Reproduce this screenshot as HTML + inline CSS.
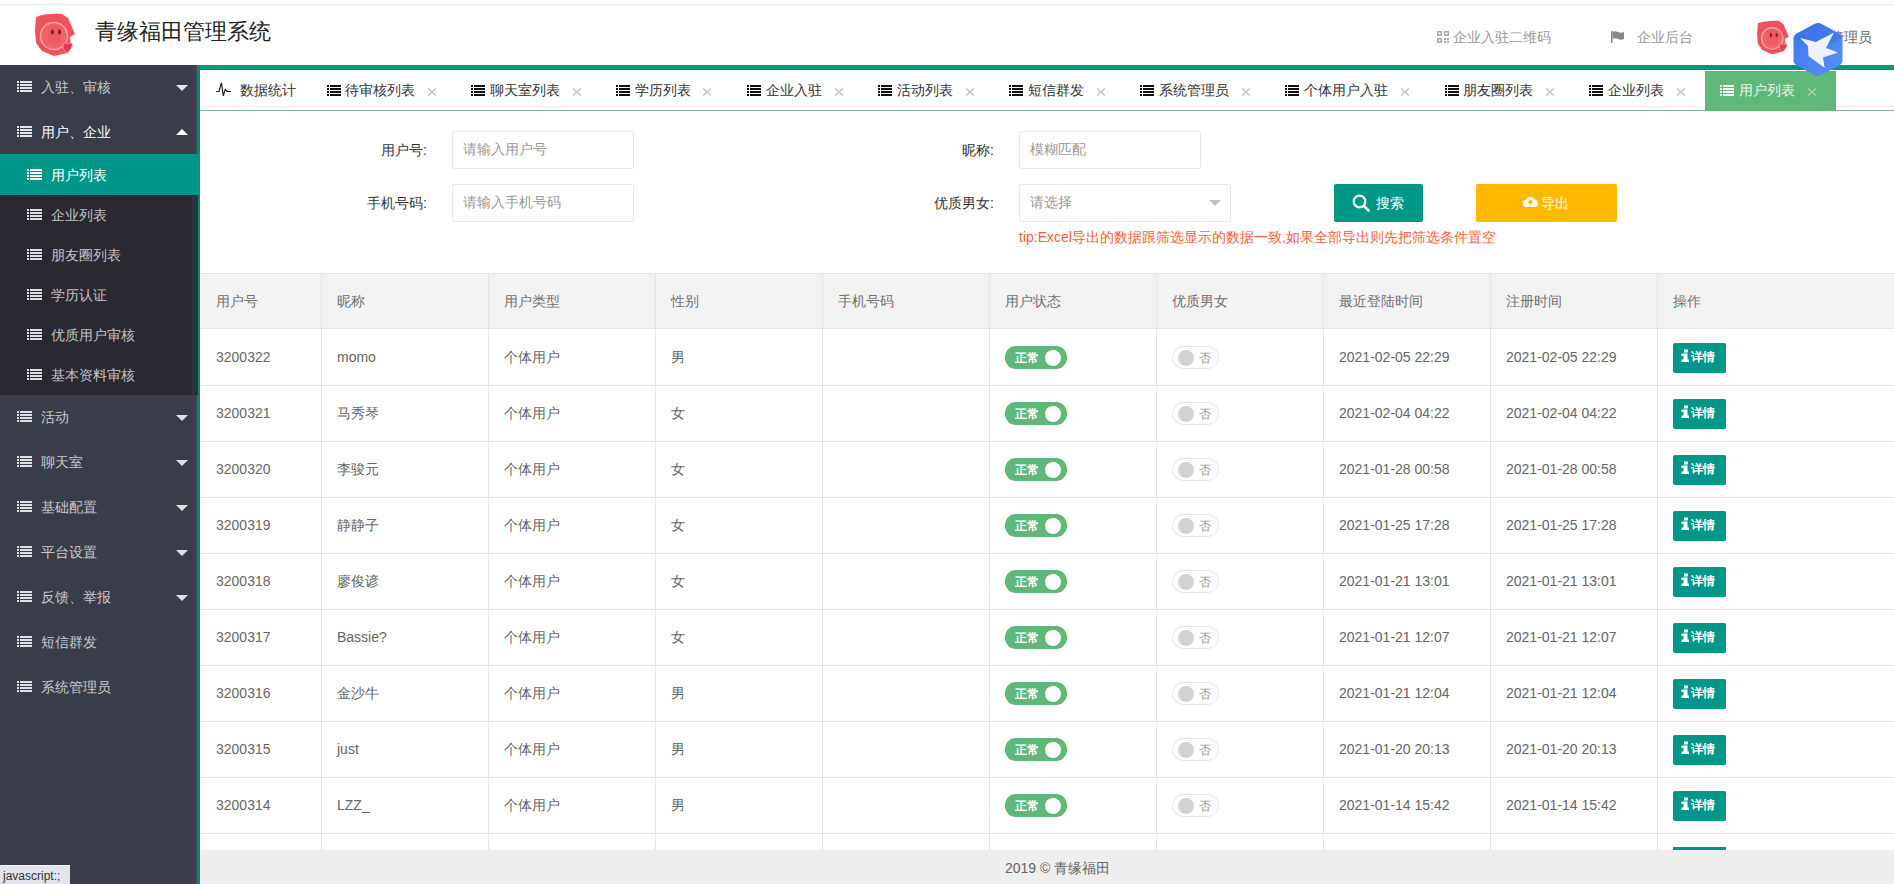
<!DOCTYPE html>
<html><head><meta charset="utf-8"><style>
html,body{margin:0;padding:0}
body{width:1894px;height:884px;overflow:hidden;position:relative;background:#fff;font-family:"Liberation Sans",sans-serif}
.t{position:absolute;white-space:nowrap;line-height:20px}
</style></head><body>
<div style="position:absolute;left:0;top:0;width:1894px;height:65px;background:#fff"></div>
<div style="position:absolute;left:0;top:4px;width:1894px;height:1px;background:#e4e4e4"></div>
<svg style="position:absolute;left:34px;top:13px" width="42" height="44" viewBox="0 0 42 44">
<path d="M2 4 Q12 0 28 1 L34 5 L41 21 L36 24 L37 34 L33 40 L20 43 L8 38 L2 30 L1 18 Z" fill="#f0525c"/>
<circle cx="20" cy="23" r="13.5" fill="#f26368" stroke="#f9a3a6" stroke-width="1.6"/>
<path d="M14 14 Q20 11 27 14 L27 30 Q20 33 14 30 Z" fill="#f0575f" opacity="0.7"/>
<ellipse cx="18.4" cy="19" rx="1.5" ry="2.8" fill="#8c1c24"/><ellipse cx="25.6" cy="19" rx="1.5" ry="2.8" fill="#8c1c24"/>
<path d="M29 31 Q31.5 28.5 34 31 Q36.5 28.5 38.5 31.5 Q38.5 35 33.5 40 Q28 36 29 31 Z" fill="#ec3350" stroke="#f8a8b0" stroke-width="0.8"/>
</svg>
<div class="t" style="left:95px;top:22px;font-size:22px;color:#222;">青缘福田管理系统</div>
<svg style="position:absolute;left:1437px;top:31px" width="12" height="12" viewBox="0 0 12 12" fill="#aaa"><path d="M0 0 H5 V5 H0 Z M1.5 1.5 V3.5 H3.5 V1.5 Z M7 0 H12 V5 H7 Z M8.5 1.5 V3.5 H10.5 V1.5 Z M0 7 H5 V12 H0 Z M1.5 8.5 V10.5 H3.5 V8.5 Z M7 7 H9 V9 H7 Z M10 7 H12 V9 H10 Z M7 10 H9 V12 H7 Z M10 10 H12 V12 H10 Z"/></svg>
<div class="t" style="left:1453px;top:27px;font-size:14px;color:#999;">企业入驻二维码</div>
<svg style="position:absolute;left:1611px;top:31px" width="14" height="12" viewBox="0 0 14 12" fill="#888"><rect x="0" y="0" width="1.5" height="12"/><path d="M1.5 1 Q4 -0.5 7 1 T13 1 V8 Q10 9.5 7 8 T1.5 8 Z"/></svg>
<div class="t" style="left:1637px;top:27px;font-size:14px;color:#999;">企业后台</div>
<svg style="position:absolute;left:1756px;top:20px" width="34" height="35" viewBox="0 0 42 44">
<path d="M2 4 Q12 0 28 1 L34 5 L41 21 L36 24 L37 34 L33 40 L20 43 L8 38 L2 30 L1 18 Z" fill="#f0525c"/>
<circle cx="20" cy="23" r="13.5" fill="#f26368" stroke="#f9a3a6" stroke-width="1.6"/>
<path d="M14 14 Q20 11 27 14 L27 30 Q20 33 14 30 Z" fill="#f0575f" opacity="0.7"/>
<ellipse cx="18.4" cy="19" rx="1.5" ry="2.8" fill="#8c1c24"/><ellipse cx="25.6" cy="19" rx="1.5" ry="2.8" fill="#8c1c24"/>
<path d="M29 31 Q31.5 28.5 34 31 Q36.5 28.5 38.5 31.5 Q38.5 35 33.5 40 Q28 36 29 31 Z" fill="#ec3350" stroke="#f8a8b0" stroke-width="0.8"/>
</svg>
<div class="t" style="left:1830px;top:27px;font-size:14px;color:#666;">管理员</div>
<div style="position:absolute;left:0;top:65px;width:192px;height:819px;background:#393d49"></div>
<div style="position:absolute;left:192px;top:65px;width:3px;height:819px;background:#46384f"></div>
<div style="position:absolute;left:195px;top:65px;width:2px;height:819px;background:#145a50"></div>
<div style="position:absolute;left:197px;top:65px;width:3px;height:819px;background:#2c7766"></div>
<div style="position:absolute;left:0;top:144px;width:192px;height:10px;background:#3d3c45"></div>
<div style="position:absolute;left:0;top:154px;width:192px;height:241px;background:#2a2931"></div>
<div style="position:absolute;left:192px;top:195px;width:2px;height:200px;background:#3a2a40"></div>
<div style="position:absolute;left:194px;top:195px;width:4px;height:200px;background:#0c3e3a"></div>
<div style="position:absolute;left:0;top:154px;width:200px;height:41px;background:#009688"></div>
<svg style="position:absolute;left:17px;top:81px" width="15" height="11" viewBox="0 0 15 11" fill="#e6e6ea" opacity="1"><rect x="0" y="0" width="2" height="2"/><rect x="3" y="0" width="12" height="2"/><rect x="0" y="3" width="2" height="2"/><rect x="3" y="3" width="12" height="2"/><rect x="0" y="6" width="2" height="2"/><rect x="3" y="6" width="12" height="2"/><rect x="0" y="9" width="2" height="2"/><rect x="3" y="9" width="12" height="2"/></svg>
<div class="t" style="left:41px;top:77px;font-size:14px;color:#c8c9cd;">入驻、审核</div>
<svg style="position:absolute;left:176px;top:85px" width="12" height="6" viewBox="0 0 12 6"><path d="M0 0 L12 0 L6 6 Z" fill="#e4e4e4"/></svg>
<svg style="position:absolute;left:17px;top:126px" width="15" height="11" viewBox="0 0 15 11" fill="#e6e6ea" opacity="1"><rect x="0" y="0" width="2" height="2"/><rect x="3" y="0" width="12" height="2"/><rect x="0" y="3" width="2" height="2"/><rect x="3" y="3" width="12" height="2"/><rect x="0" y="6" width="2" height="2"/><rect x="3" y="6" width="12" height="2"/><rect x="0" y="9" width="2" height="2"/><rect x="3" y="9" width="12" height="2"/></svg>
<div class="t" style="left:41px;top:122px;font-size:14px;color:#fff;">用户、企业</div>
<svg style="position:absolute;left:176px;top:129px" width="12" height="6" viewBox="0 0 12 6"><path d="M0 6 L6 0 L12 6 Z" fill="#fff"/></svg>
<svg style="position:absolute;left:27px;top:169px" width="15" height="11" viewBox="0 0 15 11" fill="#fff" opacity="1"><rect x="0" y="0" width="2" height="2"/><rect x="3" y="0" width="12" height="2"/><rect x="0" y="3" width="2" height="2"/><rect x="3" y="3" width="12" height="2"/><rect x="0" y="6" width="2" height="2"/><rect x="3" y="6" width="12" height="2"/><rect x="0" y="9" width="2" height="2"/><rect x="3" y="9" width="12" height="2"/></svg>
<div class="t" style="left:51px;top:165px;font-size:14px;color:#fff;">用户列表</div>
<svg style="position:absolute;left:27px;top:209px" width="15" height="11" viewBox="0 0 15 11" fill="#e0e0e4" opacity="1"><rect x="0" y="0" width="2" height="2"/><rect x="3" y="0" width="12" height="2"/><rect x="0" y="3" width="2" height="2"/><rect x="3" y="3" width="12" height="2"/><rect x="0" y="6" width="2" height="2"/><rect x="3" y="6" width="12" height="2"/><rect x="0" y="9" width="2" height="2"/><rect x="3" y="9" width="12" height="2"/></svg>
<div class="t" style="left:51px;top:205px;font-size:14px;color:#c4c3c8;">企业列表</div>
<svg style="position:absolute;left:27px;top:249px" width="15" height="11" viewBox="0 0 15 11" fill="#e0e0e4" opacity="1"><rect x="0" y="0" width="2" height="2"/><rect x="3" y="0" width="12" height="2"/><rect x="0" y="3" width="2" height="2"/><rect x="3" y="3" width="12" height="2"/><rect x="0" y="6" width="2" height="2"/><rect x="3" y="6" width="12" height="2"/><rect x="0" y="9" width="2" height="2"/><rect x="3" y="9" width="12" height="2"/></svg>
<div class="t" style="left:51px;top:245px;font-size:14px;color:#c4c3c8;">朋友圈列表</div>
<svg style="position:absolute;left:27px;top:289px" width="15" height="11" viewBox="0 0 15 11" fill="#e0e0e4" opacity="1"><rect x="0" y="0" width="2" height="2"/><rect x="3" y="0" width="12" height="2"/><rect x="0" y="3" width="2" height="2"/><rect x="3" y="3" width="12" height="2"/><rect x="0" y="6" width="2" height="2"/><rect x="3" y="6" width="12" height="2"/><rect x="0" y="9" width="2" height="2"/><rect x="3" y="9" width="12" height="2"/></svg>
<div class="t" style="left:51px;top:285px;font-size:14px;color:#c4c3c8;">学历认证</div>
<svg style="position:absolute;left:27px;top:329px" width="15" height="11" viewBox="0 0 15 11" fill="#e0e0e4" opacity="1"><rect x="0" y="0" width="2" height="2"/><rect x="3" y="0" width="12" height="2"/><rect x="0" y="3" width="2" height="2"/><rect x="3" y="3" width="12" height="2"/><rect x="0" y="6" width="2" height="2"/><rect x="3" y="6" width="12" height="2"/><rect x="0" y="9" width="2" height="2"/><rect x="3" y="9" width="12" height="2"/></svg>
<div class="t" style="left:51px;top:325px;font-size:14px;color:#c4c3c8;">优质用户审核</div>
<svg style="position:absolute;left:27px;top:369px" width="15" height="11" viewBox="0 0 15 11" fill="#e0e0e4" opacity="1"><rect x="0" y="0" width="2" height="2"/><rect x="3" y="0" width="12" height="2"/><rect x="0" y="3" width="2" height="2"/><rect x="3" y="3" width="12" height="2"/><rect x="0" y="6" width="2" height="2"/><rect x="3" y="6" width="12" height="2"/><rect x="0" y="9" width="2" height="2"/><rect x="3" y="9" width="12" height="2"/></svg>
<div class="t" style="left:51px;top:365px;font-size:14px;color:#c4c3c8;">基本资料审核</div>
<svg style="position:absolute;left:17px;top:411px" width="15" height="11" viewBox="0 0 15 11" fill="#e0e0e4" opacity="1"><rect x="0" y="0" width="2" height="2"/><rect x="3" y="0" width="12" height="2"/><rect x="0" y="3" width="2" height="2"/><rect x="3" y="3" width="12" height="2"/><rect x="0" y="6" width="2" height="2"/><rect x="3" y="6" width="12" height="2"/><rect x="0" y="9" width="2" height="2"/><rect x="3" y="9" width="12" height="2"/></svg>
<div class="t" style="left:41px;top:407px;font-size:14px;color:#c8c9cd;">活动</div>
<svg style="position:absolute;left:176px;top:415px" width="12" height="6" viewBox="0 0 12 6"><path d="M0 0 L12 0 L6 6 Z" fill="#e0e0e0"/></svg>
<svg style="position:absolute;left:17px;top:456px" width="15" height="11" viewBox="0 0 15 11" fill="#e0e0e4" opacity="1"><rect x="0" y="0" width="2" height="2"/><rect x="3" y="0" width="12" height="2"/><rect x="0" y="3" width="2" height="2"/><rect x="3" y="3" width="12" height="2"/><rect x="0" y="6" width="2" height="2"/><rect x="3" y="6" width="12" height="2"/><rect x="0" y="9" width="2" height="2"/><rect x="3" y="9" width="12" height="2"/></svg>
<div class="t" style="left:41px;top:452px;font-size:14px;color:#c8c9cd;">聊天室</div>
<svg style="position:absolute;left:176px;top:460px" width="12" height="6" viewBox="0 0 12 6"><path d="M0 0 L12 0 L6 6 Z" fill="#e0e0e0"/></svg>
<svg style="position:absolute;left:17px;top:501px" width="15" height="11" viewBox="0 0 15 11" fill="#e0e0e4" opacity="1"><rect x="0" y="0" width="2" height="2"/><rect x="3" y="0" width="12" height="2"/><rect x="0" y="3" width="2" height="2"/><rect x="3" y="3" width="12" height="2"/><rect x="0" y="6" width="2" height="2"/><rect x="3" y="6" width="12" height="2"/><rect x="0" y="9" width="2" height="2"/><rect x="3" y="9" width="12" height="2"/></svg>
<div class="t" style="left:41px;top:497px;font-size:14px;color:#c8c9cd;">基础配置</div>
<svg style="position:absolute;left:176px;top:505px" width="12" height="6" viewBox="0 0 12 6"><path d="M0 0 L12 0 L6 6 Z" fill="#e0e0e0"/></svg>
<svg style="position:absolute;left:17px;top:546px" width="15" height="11" viewBox="0 0 15 11" fill="#e0e0e4" opacity="1"><rect x="0" y="0" width="2" height="2"/><rect x="3" y="0" width="12" height="2"/><rect x="0" y="3" width="2" height="2"/><rect x="3" y="3" width="12" height="2"/><rect x="0" y="6" width="2" height="2"/><rect x="3" y="6" width="12" height="2"/><rect x="0" y="9" width="2" height="2"/><rect x="3" y="9" width="12" height="2"/></svg>
<div class="t" style="left:41px;top:542px;font-size:14px;color:#c8c9cd;">平台设置</div>
<svg style="position:absolute;left:176px;top:550px" width="12" height="6" viewBox="0 0 12 6"><path d="M0 0 L12 0 L6 6 Z" fill="#e0e0e0"/></svg>
<svg style="position:absolute;left:17px;top:591px" width="15" height="11" viewBox="0 0 15 11" fill="#e0e0e4" opacity="1"><rect x="0" y="0" width="2" height="2"/><rect x="3" y="0" width="12" height="2"/><rect x="0" y="3" width="2" height="2"/><rect x="3" y="3" width="12" height="2"/><rect x="0" y="6" width="2" height="2"/><rect x="3" y="6" width="12" height="2"/><rect x="0" y="9" width="2" height="2"/><rect x="3" y="9" width="12" height="2"/></svg>
<div class="t" style="left:41px;top:587px;font-size:14px;color:#c8c9cd;">反馈、举报</div>
<svg style="position:absolute;left:176px;top:595px" width="12" height="6" viewBox="0 0 12 6"><path d="M0 0 L12 0 L6 6 Z" fill="#e0e0e0"/></svg>
<svg style="position:absolute;left:17px;top:636px" width="15" height="11" viewBox="0 0 15 11" fill="#e0e0e4" opacity="1"><rect x="0" y="0" width="2" height="2"/><rect x="3" y="0" width="12" height="2"/><rect x="0" y="3" width="2" height="2"/><rect x="3" y="3" width="12" height="2"/><rect x="0" y="6" width="2" height="2"/><rect x="3" y="6" width="12" height="2"/><rect x="0" y="9" width="2" height="2"/><rect x="3" y="9" width="12" height="2"/></svg>
<div class="t" style="left:41px;top:632px;font-size:14px;color:#c8c9cd;">短信群发</div>
<svg style="position:absolute;left:17px;top:681px" width="15" height="11" viewBox="0 0 15 11" fill="#e0e0e4" opacity="1"><rect x="0" y="0" width="2" height="2"/><rect x="3" y="0" width="12" height="2"/><rect x="0" y="3" width="2" height="2"/><rect x="3" y="3" width="12" height="2"/><rect x="0" y="6" width="2" height="2"/><rect x="3" y="6" width="12" height="2"/><rect x="0" y="9" width="2" height="2"/><rect x="3" y="9" width="12" height="2"/></svg>
<div class="t" style="left:41px;top:677px;font-size:14px;color:#c8c9cd;">系统管理员</div>
<div style="position:absolute;left:200px;top:65px;width:1694px;height:5px;background:#009a7a"></div>
<div style="position:absolute;left:200px;top:106px;width:1694px;height:1px;background:#ecf0ef"></div>
<div style="position:absolute;left:200px;top:110px;width:1694px;height:1px;background:#86aea0"></div>
<svg style="position:absolute;left:215px;top:82px" width="17" height="15" viewBox="0 0 17 15"><path d="M1 9.5 H4 L6.4 0.8 L8.3 13.8 L10.2 7.4 L12 9.5 H16" fill="none" stroke="#222" stroke-width="1.2" stroke-linejoin="miter"/></svg>
<div class="t" style="left:240px;top:80px;font-size:14px;color:#333;">数据统计</div>
<svg style="position:absolute;left:327px;top:85px" width="14" height="11" viewBox="0 0 14 11" fill="#111" opacity="1"><rect x="0" y="0" width="2" height="2"/><rect x="3" y="0" width="11" height="2"/><rect x="0" y="3" width="2" height="2"/><rect x="3" y="3" width="11" height="2"/><rect x="0" y="6" width="2" height="2"/><rect x="3" y="6" width="11" height="2"/><rect x="0" y="9" width="2" height="2"/><rect x="3" y="9" width="11" height="2"/></svg>
<div class="t" style="left:345px;top:80px;font-size:14px;color:#333;">待审核列表</div>
<svg style="position:absolute;left:427px;top:88px" width="10" height="8" viewBox="0 0 10 8"><path d="M1 0.5 L9 7.5 M9 0.5 L1 7.5" stroke="#c4c4c4" stroke-width="1.6"/></svg>
<svg style="position:absolute;left:471px;top:85px" width="14" height="11" viewBox="0 0 14 11" fill="#111" opacity="1"><rect x="0" y="0" width="2" height="2"/><rect x="3" y="0" width="11" height="2"/><rect x="0" y="3" width="2" height="2"/><rect x="3" y="3" width="11" height="2"/><rect x="0" y="6" width="2" height="2"/><rect x="3" y="6" width="11" height="2"/><rect x="0" y="9" width="2" height="2"/><rect x="3" y="9" width="11" height="2"/></svg>
<div class="t" style="left:490px;top:80px;font-size:14px;color:#333;">聊天室列表</div>
<svg style="position:absolute;left:572px;top:88px" width="10" height="8" viewBox="0 0 10 8"><path d="M1 0.5 L9 7.5 M9 0.5 L1 7.5" stroke="#c4c4c4" stroke-width="1.6"/></svg>
<svg style="position:absolute;left:616px;top:85px" width="14" height="11" viewBox="0 0 14 11" fill="#111" opacity="1"><rect x="0" y="0" width="2" height="2"/><rect x="3" y="0" width="11" height="2"/><rect x="0" y="3" width="2" height="2"/><rect x="3" y="3" width="11" height="2"/><rect x="0" y="6" width="2" height="2"/><rect x="3" y="6" width="11" height="2"/><rect x="0" y="9" width="2" height="2"/><rect x="3" y="9" width="11" height="2"/></svg>
<div class="t" style="left:635px;top:80px;font-size:14px;color:#333;">学历列表</div>
<svg style="position:absolute;left:702px;top:88px" width="10" height="8" viewBox="0 0 10 8"><path d="M1 0.5 L9 7.5 M9 0.5 L1 7.5" stroke="#c4c4c4" stroke-width="1.6"/></svg>
<svg style="position:absolute;left:747px;top:85px" width="14" height="11" viewBox="0 0 14 11" fill="#111" opacity="1"><rect x="0" y="0" width="2" height="2"/><rect x="3" y="0" width="11" height="2"/><rect x="0" y="3" width="2" height="2"/><rect x="3" y="3" width="11" height="2"/><rect x="0" y="6" width="2" height="2"/><rect x="3" y="6" width="11" height="2"/><rect x="0" y="9" width="2" height="2"/><rect x="3" y="9" width="11" height="2"/></svg>
<div class="t" style="left:766px;top:80px;font-size:14px;color:#333;">企业入驻</div>
<svg style="position:absolute;left:834px;top:88px" width="10" height="8" viewBox="0 0 10 8"><path d="M1 0.5 L9 7.5 M9 0.5 L1 7.5" stroke="#c4c4c4" stroke-width="1.6"/></svg>
<svg style="position:absolute;left:878px;top:85px" width="14" height="11" viewBox="0 0 14 11" fill="#111" opacity="1"><rect x="0" y="0" width="2" height="2"/><rect x="3" y="0" width="11" height="2"/><rect x="0" y="3" width="2" height="2"/><rect x="3" y="3" width="11" height="2"/><rect x="0" y="6" width="2" height="2"/><rect x="3" y="6" width="11" height="2"/><rect x="0" y="9" width="2" height="2"/><rect x="3" y="9" width="11" height="2"/></svg>
<div class="t" style="left:897px;top:80px;font-size:14px;color:#333;">活动列表</div>
<svg style="position:absolute;left:965px;top:88px" width="10" height="8" viewBox="0 0 10 8"><path d="M1 0.5 L9 7.5 M9 0.5 L1 7.5" stroke="#c4c4c4" stroke-width="1.6"/></svg>
<svg style="position:absolute;left:1009px;top:85px" width="14" height="11" viewBox="0 0 14 11" fill="#111" opacity="1"><rect x="0" y="0" width="2" height="2"/><rect x="3" y="0" width="11" height="2"/><rect x="0" y="3" width="2" height="2"/><rect x="3" y="3" width="11" height="2"/><rect x="0" y="6" width="2" height="2"/><rect x="3" y="6" width="11" height="2"/><rect x="0" y="9" width="2" height="2"/><rect x="3" y="9" width="11" height="2"/></svg>
<div class="t" style="left:1028px;top:80px;font-size:14px;color:#333;">短信群发</div>
<svg style="position:absolute;left:1096px;top:88px" width="10" height="8" viewBox="0 0 10 8"><path d="M1 0.5 L9 7.5 M9 0.5 L1 7.5" stroke="#c4c4c4" stroke-width="1.6"/></svg>
<svg style="position:absolute;left:1140px;top:85px" width="14" height="11" viewBox="0 0 14 11" fill="#111" opacity="1"><rect x="0" y="0" width="2" height="2"/><rect x="3" y="0" width="11" height="2"/><rect x="0" y="3" width="2" height="2"/><rect x="3" y="3" width="11" height="2"/><rect x="0" y="6" width="2" height="2"/><rect x="3" y="6" width="11" height="2"/><rect x="0" y="9" width="2" height="2"/><rect x="3" y="9" width="11" height="2"/></svg>
<div class="t" style="left:1159px;top:80px;font-size:14px;color:#333;">系统管理员</div>
<svg style="position:absolute;left:1241px;top:88px" width="10" height="8" viewBox="0 0 10 8"><path d="M1 0.5 L9 7.5 M9 0.5 L1 7.5" stroke="#c4c4c4" stroke-width="1.6"/></svg>
<svg style="position:absolute;left:1285px;top:85px" width="14" height="11" viewBox="0 0 14 11" fill="#111" opacity="1"><rect x="0" y="0" width="2" height="2"/><rect x="3" y="0" width="11" height="2"/><rect x="0" y="3" width="2" height="2"/><rect x="3" y="3" width="11" height="2"/><rect x="0" y="6" width="2" height="2"/><rect x="3" y="6" width="11" height="2"/><rect x="0" y="9" width="2" height="2"/><rect x="3" y="9" width="11" height="2"/></svg>
<div class="t" style="left:1304px;top:80px;font-size:14px;color:#333;">个体用户入驻</div>
<svg style="position:absolute;left:1400px;top:88px" width="10" height="8" viewBox="0 0 10 8"><path d="M1 0.5 L9 7.5 M9 0.5 L1 7.5" stroke="#c4c4c4" stroke-width="1.6"/></svg>
<svg style="position:absolute;left:1445px;top:85px" width="14" height="11" viewBox="0 0 14 11" fill="#111" opacity="1"><rect x="0" y="0" width="2" height="2"/><rect x="3" y="0" width="11" height="2"/><rect x="0" y="3" width="2" height="2"/><rect x="3" y="3" width="11" height="2"/><rect x="0" y="6" width="2" height="2"/><rect x="3" y="6" width="11" height="2"/><rect x="0" y="9" width="2" height="2"/><rect x="3" y="9" width="11" height="2"/></svg>
<div class="t" style="left:1463px;top:80px;font-size:14px;color:#333;">朋友圈列表</div>
<svg style="position:absolute;left:1545px;top:88px" width="10" height="8" viewBox="0 0 10 8"><path d="M1 0.5 L9 7.5 M9 0.5 L1 7.5" stroke="#c4c4c4" stroke-width="1.6"/></svg>
<svg style="position:absolute;left:1589px;top:85px" width="14" height="11" viewBox="0 0 14 11" fill="#111" opacity="1"><rect x="0" y="0" width="2" height="2"/><rect x="3" y="0" width="11" height="2"/><rect x="0" y="3" width="2" height="2"/><rect x="3" y="3" width="11" height="2"/><rect x="0" y="6" width="2" height="2"/><rect x="3" y="6" width="11" height="2"/><rect x="0" y="9" width="2" height="2"/><rect x="3" y="9" width="11" height="2"/></svg>
<div class="t" style="left:1608px;top:80px;font-size:14px;color:#333;">企业列表</div>
<svg style="position:absolute;left:1676px;top:88px" width="10" height="8" viewBox="0 0 10 8"><path d="M1 0.5 L9 7.5 M9 0.5 L1 7.5" stroke="#c4c4c4" stroke-width="1.6"/></svg>
<div style="position:absolute;left:1705px;top:71px;width:131px;height:40px;background:#5fb878"></div>
<svg style="position:absolute;left:1720px;top:85px" width="14" height="11" viewBox="0 0 14 11" fill="#fff" opacity="0.9"><rect x="0" y="0" width="2" height="2"/><rect x="3" y="0" width="11" height="2"/><rect x="0" y="3" width="2" height="2"/><rect x="3" y="3" width="11" height="2"/><rect x="0" y="6" width="2" height="2"/><rect x="3" y="6" width="11" height="2"/><rect x="0" y="9" width="2" height="2"/><rect x="3" y="9" width="11" height="2"/></svg>
<div class="t" style="left:1739px;top:80px;font-size:14px;color:#eaf6ee;">用户列表</div>
<svg style="position:absolute;left:1807px;top:88px" width="10" height="8" viewBox="0 0 10 8"><path d="M1 0.5 L9 7.5 M9 0.5 L1 7.5" stroke="#9fd2ae" stroke-width="1.6"/></svg>
<div class="t" style="left:381px;top:140px;font-size:14px;color:#333;">用户号:</div>
<div style="position:absolute;left:452px;top:131px;width:180px;height:36px;border:1px solid #e8e8e8;border-radius:2px;background:#fff"></div><div class="t" style="left:463px;top:139px;font-size:14px;color:#999;">请输入用户号</div>
<div class="t" style="left:367px;top:193px;font-size:14px;color:#333;">手机号码:</div>
<div style="position:absolute;left:452px;top:184px;width:180px;height:36px;border:1px solid #e8e8e8;border-radius:2px;background:#fff"></div><div class="t" style="left:463px;top:192px;font-size:14px;color:#999;">请输入手机号码</div>
<div class="t" style="left:962px;top:140px;font-size:14px;color:#333;">昵称:</div>
<div style="position:absolute;left:1019px;top:131px;width:180px;height:36px;border:1px solid #e8e8e8;border-radius:2px;background:#fff"></div><div class="t" style="left:1030px;top:139px;font-size:14px;color:#999;">模糊匹配</div>
<div class="t" style="left:934px;top:193px;font-size:14px;color:#333;">优质男女:</div>
<div style="position:absolute;left:1019px;top:184px;width:210px;height:36px;border:1px solid #e8e8e8;border-radius:2px;background:#fff"></div><div class="t" style="left:1030px;top:192px;font-size:14px;color:#999;">请选择</div>
<svg style="position:absolute;left:1209px;top:200px" width="12" height="6" viewBox="0 0 12 6"><path d="M0 0 L12 0 L6 6 Z" fill="#c2c2c2"/></svg>
<div style="position:absolute;left:1334px;top:184px;width:89px;height:38px;background:#009688;border-radius:2px"></div>
<svg style="position:absolute;left:1352px;top:194px" width="18" height="18" viewBox="0 0 18 18"><circle cx="7.5" cy="7.5" r="5.8" fill="none" stroke="#fff" stroke-width="2.2"/><path d="M12 12 L16.5 16.5" stroke="#fff" stroke-width="2.6" stroke-linecap="round"/></svg>
<div class="t" style="left:1376px;top:193px;font-size:14px;color:#fff;">搜索</div>
<div style="position:absolute;left:1476px;top:184px;width:141px;height:38px;background:#ffb800;border-radius:2px"></div>
<svg style="position:absolute;left:1523px;top:196px" width="15" height="12" viewBox="0 0 15 12"><path d="M3.5 11 A3.5 3.5 0 0 1 3 4 A4.5 4.5 0 0 1 11.5 3.5 A3.8 3.8 0 0 1 12 11 Z" fill="#fff"/><path d="M7.5 4 V9 M5.3 6.8 L7.5 4.5 L9.7 6.8" stroke="#ffb800" stroke-width="1.5" fill="none"/></svg>
<div class="t" style="left:1541px;top:193px;font-size:14px;color:#fff;">导出</div>
<div class="t" style="left:1019px;top:227px;font-size:14px;color:#f8603a;">tip:Excel导出的数据跟筛选显示的数据一致,如果全部导出则先把筛选条件置空</div>
<div style="position:absolute;left:200px;top:273px;width:1694px;height:1px;background:#e2e2e2"></div>
<div style="position:absolute;left:200px;top:274px;width:1694px;height:54px;background:#f3f3f3"></div>
<div style="position:absolute;left:321px;top:273px;width:1px;height:577px;background:#e6e6e6"></div>
<div style="position:absolute;left:488px;top:273px;width:1px;height:577px;background:#e6e6e6"></div>
<div style="position:absolute;left:655px;top:273px;width:1px;height:577px;background:#e6e6e6"></div>
<div style="position:absolute;left:822px;top:273px;width:1px;height:577px;background:#e6e6e6"></div>
<div style="position:absolute;left:989px;top:273px;width:1px;height:577px;background:#e6e6e6"></div>
<div style="position:absolute;left:1156px;top:273px;width:1px;height:577px;background:#e6e6e6"></div>
<div style="position:absolute;left:1323px;top:273px;width:1px;height:577px;background:#e6e6e6"></div>
<div style="position:absolute;left:1490px;top:273px;width:1px;height:577px;background:#e6e6e6"></div>
<div style="position:absolute;left:1657px;top:273px;width:1px;height:577px;background:#e6e6e6"></div>
<div class="t" style="left:216px;top:291px;font-size:14px;color:#707070;">用户号</div>
<div class="t" style="left:337px;top:291px;font-size:14px;color:#707070;">昵称</div>
<div class="t" style="left:504px;top:291px;font-size:14px;color:#707070;">用户类型</div>
<div class="t" style="left:671px;top:291px;font-size:14px;color:#707070;">性别</div>
<div class="t" style="left:838px;top:291px;font-size:14px;color:#707070;">手机号码</div>
<div class="t" style="left:1005px;top:291px;font-size:14px;color:#707070;">用户状态</div>
<div class="t" style="left:1172px;top:291px;font-size:14px;color:#707070;">优质男女</div>
<div class="t" style="left:1339px;top:291px;font-size:14px;color:#707070;">最近登陆时间</div>
<div class="t" style="left:1506px;top:291px;font-size:14px;color:#707070;">注册时间</div>
<div class="t" style="left:1673px;top:291px;font-size:14px;color:#707070;">操作</div>
<div style="position:absolute;left:200px;top:328px;width:1694px;height:1px;background:#e6e6e6"></div>
<div style="position:absolute;left:200px;top:385px;width:1694px;height:1px;background:#e6e6e6"></div>
<div style="position:absolute;left:200px;top:441px;width:1694px;height:1px;background:#e6e6e6"></div>
<div style="position:absolute;left:200px;top:497px;width:1694px;height:1px;background:#e6e6e6"></div>
<div style="position:absolute;left:200px;top:553px;width:1694px;height:1px;background:#e6e6e6"></div>
<div style="position:absolute;left:200px;top:609px;width:1694px;height:1px;background:#e6e6e6"></div>
<div style="position:absolute;left:200px;top:665px;width:1694px;height:1px;background:#e6e6e6"></div>
<div style="position:absolute;left:200px;top:721px;width:1694px;height:1px;background:#e6e6e6"></div>
<div style="position:absolute;left:200px;top:777px;width:1694px;height:1px;background:#e6e6e6"></div>
<div style="position:absolute;left:200px;top:833px;width:1694px;height:1px;background:#e6e6e6"></div>
<div class="t" style="left:216px;top:347px;font-size:14px;color:#666;">3200322</div>
<div class="t" style="left:337px;top:347px;font-size:14px;color:#666;">momo</div>
<div class="t" style="left:504px;top:347px;font-size:14px;color:#666;">个体用户</div>
<div class="t" style="left:671px;top:347px;font-size:14px;color:#666;">男</div>
<div style="position:absolute;left:1005px;top:346px;width:62px;height:23px;border-radius:11px;background:#5fb878"></div>
<div class="t" style="left:1015px;top:348px;font-size:12px;color:#fff;font-weight:bold">正常</div>
<div style="position:absolute;left:1045px;top:350px;width:16px;height:16px;border-radius:8px;background:#fff"></div>
<div style="position:absolute;left:1172px;top:346px;width:47px;height:23px;border-radius:12px;border:1px solid #e2e2e2;background:#fff;box-sizing:border-box"></div>
<div style="position:absolute;left:1178px;top:350px;width:16px;height:16px;border-radius:8px;background:#d2d2d2"></div>
<div class="t" style="left:1199px;top:348px;font-size:12px;color:#999;">否</div>
<div class="t" style="left:1339px;top:347px;font-size:14px;color:#666;">2021-02-05 22:29</div>
<div class="t" style="left:1506px;top:347px;font-size:14px;color:#666;">2021-02-05 22:29</div>
<div style="position:absolute;left:1673px;top:343px;width:53px;height:30px;background:#009688;border-radius:2px"></div>
<svg style="position:absolute;left:1681px;top:349px" width="9" height="14" viewBox="0 0 9 14" fill="#fff"><rect x="3" y="0.5" width="4" height="3"/><path d="M0.5 4.5 H6.5 V10.5 H8 V13 H0.5 V10.5 H2.5 V7 H0.5 Z"/></svg>
<div class="t" style="left:1691px;top:347px;font-size:12px;color:#fff;font-weight:bold">详情</div>
<div class="t" style="left:216px;top:403px;font-size:14px;color:#666;">3200321</div>
<div class="t" style="left:337px;top:403px;font-size:14px;color:#666;">马秀琴</div>
<div class="t" style="left:504px;top:403px;font-size:14px;color:#666;">个体用户</div>
<div class="t" style="left:671px;top:403px;font-size:14px;color:#666;">女</div>
<div style="position:absolute;left:1005px;top:402px;width:62px;height:23px;border-radius:11px;background:#5fb878"></div>
<div class="t" style="left:1015px;top:404px;font-size:12px;color:#fff;font-weight:bold">正常</div>
<div style="position:absolute;left:1045px;top:406px;width:16px;height:16px;border-radius:8px;background:#fff"></div>
<div style="position:absolute;left:1172px;top:402px;width:47px;height:23px;border-radius:12px;border:1px solid #e2e2e2;background:#fff;box-sizing:border-box"></div>
<div style="position:absolute;left:1178px;top:406px;width:16px;height:16px;border-radius:8px;background:#d2d2d2"></div>
<div class="t" style="left:1199px;top:404px;font-size:12px;color:#999;">否</div>
<div class="t" style="left:1339px;top:403px;font-size:14px;color:#666;">2021-02-04 04:22</div>
<div class="t" style="left:1506px;top:403px;font-size:14px;color:#666;">2021-02-04 04:22</div>
<div style="position:absolute;left:1673px;top:399px;width:53px;height:30px;background:#009688;border-radius:2px"></div>
<svg style="position:absolute;left:1681px;top:405px" width="9" height="14" viewBox="0 0 9 14" fill="#fff"><rect x="3" y="0.5" width="4" height="3"/><path d="M0.5 4.5 H6.5 V10.5 H8 V13 H0.5 V10.5 H2.5 V7 H0.5 Z"/></svg>
<div class="t" style="left:1691px;top:403px;font-size:12px;color:#fff;font-weight:bold">详情</div>
<div class="t" style="left:216px;top:459px;font-size:14px;color:#666;">3200320</div>
<div class="t" style="left:337px;top:459px;font-size:14px;color:#666;">李骏元</div>
<div class="t" style="left:504px;top:459px;font-size:14px;color:#666;">个体用户</div>
<div class="t" style="left:671px;top:459px;font-size:14px;color:#666;">女</div>
<div style="position:absolute;left:1005px;top:458px;width:62px;height:23px;border-radius:11px;background:#5fb878"></div>
<div class="t" style="left:1015px;top:460px;font-size:12px;color:#fff;font-weight:bold">正常</div>
<div style="position:absolute;left:1045px;top:462px;width:16px;height:16px;border-radius:8px;background:#fff"></div>
<div style="position:absolute;left:1172px;top:458px;width:47px;height:23px;border-radius:12px;border:1px solid #e2e2e2;background:#fff;box-sizing:border-box"></div>
<div style="position:absolute;left:1178px;top:462px;width:16px;height:16px;border-radius:8px;background:#d2d2d2"></div>
<div class="t" style="left:1199px;top:460px;font-size:12px;color:#999;">否</div>
<div class="t" style="left:1339px;top:459px;font-size:14px;color:#666;">2021-01-28 00:58</div>
<div class="t" style="left:1506px;top:459px;font-size:14px;color:#666;">2021-01-28 00:58</div>
<div style="position:absolute;left:1673px;top:455px;width:53px;height:30px;background:#009688;border-radius:2px"></div>
<svg style="position:absolute;left:1681px;top:461px" width="9" height="14" viewBox="0 0 9 14" fill="#fff"><rect x="3" y="0.5" width="4" height="3"/><path d="M0.5 4.5 H6.5 V10.5 H8 V13 H0.5 V10.5 H2.5 V7 H0.5 Z"/></svg>
<div class="t" style="left:1691px;top:459px;font-size:12px;color:#fff;font-weight:bold">详情</div>
<div class="t" style="left:216px;top:515px;font-size:14px;color:#666;">3200319</div>
<div class="t" style="left:337px;top:515px;font-size:14px;color:#666;">静静子</div>
<div class="t" style="left:504px;top:515px;font-size:14px;color:#666;">个体用户</div>
<div class="t" style="left:671px;top:515px;font-size:14px;color:#666;">女</div>
<div style="position:absolute;left:1005px;top:514px;width:62px;height:23px;border-radius:11px;background:#5fb878"></div>
<div class="t" style="left:1015px;top:516px;font-size:12px;color:#fff;font-weight:bold">正常</div>
<div style="position:absolute;left:1045px;top:518px;width:16px;height:16px;border-radius:8px;background:#fff"></div>
<div style="position:absolute;left:1172px;top:514px;width:47px;height:23px;border-radius:12px;border:1px solid #e2e2e2;background:#fff;box-sizing:border-box"></div>
<div style="position:absolute;left:1178px;top:518px;width:16px;height:16px;border-radius:8px;background:#d2d2d2"></div>
<div class="t" style="left:1199px;top:516px;font-size:12px;color:#999;">否</div>
<div class="t" style="left:1339px;top:515px;font-size:14px;color:#666;">2021-01-25 17:28</div>
<div class="t" style="left:1506px;top:515px;font-size:14px;color:#666;">2021-01-25 17:28</div>
<div style="position:absolute;left:1673px;top:511px;width:53px;height:30px;background:#009688;border-radius:2px"></div>
<svg style="position:absolute;left:1681px;top:517px" width="9" height="14" viewBox="0 0 9 14" fill="#fff"><rect x="3" y="0.5" width="4" height="3"/><path d="M0.5 4.5 H6.5 V10.5 H8 V13 H0.5 V10.5 H2.5 V7 H0.5 Z"/></svg>
<div class="t" style="left:1691px;top:515px;font-size:12px;color:#fff;font-weight:bold">详情</div>
<div class="t" style="left:216px;top:571px;font-size:14px;color:#666;">3200318</div>
<div class="t" style="left:337px;top:571px;font-size:14px;color:#666;">廖俊谚</div>
<div class="t" style="left:504px;top:571px;font-size:14px;color:#666;">个体用户</div>
<div class="t" style="left:671px;top:571px;font-size:14px;color:#666;">女</div>
<div style="position:absolute;left:1005px;top:570px;width:62px;height:23px;border-radius:11px;background:#5fb878"></div>
<div class="t" style="left:1015px;top:572px;font-size:12px;color:#fff;font-weight:bold">正常</div>
<div style="position:absolute;left:1045px;top:574px;width:16px;height:16px;border-radius:8px;background:#fff"></div>
<div style="position:absolute;left:1172px;top:570px;width:47px;height:23px;border-radius:12px;border:1px solid #e2e2e2;background:#fff;box-sizing:border-box"></div>
<div style="position:absolute;left:1178px;top:574px;width:16px;height:16px;border-radius:8px;background:#d2d2d2"></div>
<div class="t" style="left:1199px;top:572px;font-size:12px;color:#999;">否</div>
<div class="t" style="left:1339px;top:571px;font-size:14px;color:#666;">2021-01-21 13:01</div>
<div class="t" style="left:1506px;top:571px;font-size:14px;color:#666;">2021-01-21 13:01</div>
<div style="position:absolute;left:1673px;top:567px;width:53px;height:30px;background:#009688;border-radius:2px"></div>
<svg style="position:absolute;left:1681px;top:573px" width="9" height="14" viewBox="0 0 9 14" fill="#fff"><rect x="3" y="0.5" width="4" height="3"/><path d="M0.5 4.5 H6.5 V10.5 H8 V13 H0.5 V10.5 H2.5 V7 H0.5 Z"/></svg>
<div class="t" style="left:1691px;top:571px;font-size:12px;color:#fff;font-weight:bold">详情</div>
<div class="t" style="left:216px;top:627px;font-size:14px;color:#666;">3200317</div>
<div class="t" style="left:337px;top:627px;font-size:14px;color:#666;">Bassie?</div>
<div class="t" style="left:504px;top:627px;font-size:14px;color:#666;">个体用户</div>
<div class="t" style="left:671px;top:627px;font-size:14px;color:#666;">女</div>
<div style="position:absolute;left:1005px;top:626px;width:62px;height:23px;border-radius:11px;background:#5fb878"></div>
<div class="t" style="left:1015px;top:628px;font-size:12px;color:#fff;font-weight:bold">正常</div>
<div style="position:absolute;left:1045px;top:630px;width:16px;height:16px;border-radius:8px;background:#fff"></div>
<div style="position:absolute;left:1172px;top:626px;width:47px;height:23px;border-radius:12px;border:1px solid #e2e2e2;background:#fff;box-sizing:border-box"></div>
<div style="position:absolute;left:1178px;top:630px;width:16px;height:16px;border-radius:8px;background:#d2d2d2"></div>
<div class="t" style="left:1199px;top:628px;font-size:12px;color:#999;">否</div>
<div class="t" style="left:1339px;top:627px;font-size:14px;color:#666;">2021-01-21 12:07</div>
<div class="t" style="left:1506px;top:627px;font-size:14px;color:#666;">2021-01-21 12:07</div>
<div style="position:absolute;left:1673px;top:623px;width:53px;height:30px;background:#009688;border-radius:2px"></div>
<svg style="position:absolute;left:1681px;top:629px" width="9" height="14" viewBox="0 0 9 14" fill="#fff"><rect x="3" y="0.5" width="4" height="3"/><path d="M0.5 4.5 H6.5 V10.5 H8 V13 H0.5 V10.5 H2.5 V7 H0.5 Z"/></svg>
<div class="t" style="left:1691px;top:627px;font-size:12px;color:#fff;font-weight:bold">详情</div>
<div class="t" style="left:216px;top:683px;font-size:14px;color:#666;">3200316</div>
<div class="t" style="left:337px;top:683px;font-size:14px;color:#666;">金沙牛</div>
<div class="t" style="left:504px;top:683px;font-size:14px;color:#666;">个体用户</div>
<div class="t" style="left:671px;top:683px;font-size:14px;color:#666;">男</div>
<div style="position:absolute;left:1005px;top:682px;width:62px;height:23px;border-radius:11px;background:#5fb878"></div>
<div class="t" style="left:1015px;top:684px;font-size:12px;color:#fff;font-weight:bold">正常</div>
<div style="position:absolute;left:1045px;top:686px;width:16px;height:16px;border-radius:8px;background:#fff"></div>
<div style="position:absolute;left:1172px;top:682px;width:47px;height:23px;border-radius:12px;border:1px solid #e2e2e2;background:#fff;box-sizing:border-box"></div>
<div style="position:absolute;left:1178px;top:686px;width:16px;height:16px;border-radius:8px;background:#d2d2d2"></div>
<div class="t" style="left:1199px;top:684px;font-size:12px;color:#999;">否</div>
<div class="t" style="left:1339px;top:683px;font-size:14px;color:#666;">2021-01-21 12:04</div>
<div class="t" style="left:1506px;top:683px;font-size:14px;color:#666;">2021-01-21 12:04</div>
<div style="position:absolute;left:1673px;top:679px;width:53px;height:30px;background:#009688;border-radius:2px"></div>
<svg style="position:absolute;left:1681px;top:685px" width="9" height="14" viewBox="0 0 9 14" fill="#fff"><rect x="3" y="0.5" width="4" height="3"/><path d="M0.5 4.5 H6.5 V10.5 H8 V13 H0.5 V10.5 H2.5 V7 H0.5 Z"/></svg>
<div class="t" style="left:1691px;top:683px;font-size:12px;color:#fff;font-weight:bold">详情</div>
<div class="t" style="left:216px;top:739px;font-size:14px;color:#666;">3200315</div>
<div class="t" style="left:337px;top:739px;font-size:14px;color:#666;">just</div>
<div class="t" style="left:504px;top:739px;font-size:14px;color:#666;">个体用户</div>
<div class="t" style="left:671px;top:739px;font-size:14px;color:#666;">男</div>
<div style="position:absolute;left:1005px;top:738px;width:62px;height:23px;border-radius:11px;background:#5fb878"></div>
<div class="t" style="left:1015px;top:740px;font-size:12px;color:#fff;font-weight:bold">正常</div>
<div style="position:absolute;left:1045px;top:742px;width:16px;height:16px;border-radius:8px;background:#fff"></div>
<div style="position:absolute;left:1172px;top:738px;width:47px;height:23px;border-radius:12px;border:1px solid #e2e2e2;background:#fff;box-sizing:border-box"></div>
<div style="position:absolute;left:1178px;top:742px;width:16px;height:16px;border-radius:8px;background:#d2d2d2"></div>
<div class="t" style="left:1199px;top:740px;font-size:12px;color:#999;">否</div>
<div class="t" style="left:1339px;top:739px;font-size:14px;color:#666;">2021-01-20 20:13</div>
<div class="t" style="left:1506px;top:739px;font-size:14px;color:#666;">2021-01-20 20:13</div>
<div style="position:absolute;left:1673px;top:735px;width:53px;height:30px;background:#009688;border-radius:2px"></div>
<svg style="position:absolute;left:1681px;top:741px" width="9" height="14" viewBox="0 0 9 14" fill="#fff"><rect x="3" y="0.5" width="4" height="3"/><path d="M0.5 4.5 H6.5 V10.5 H8 V13 H0.5 V10.5 H2.5 V7 H0.5 Z"/></svg>
<div class="t" style="left:1691px;top:739px;font-size:12px;color:#fff;font-weight:bold">详情</div>
<div class="t" style="left:216px;top:795px;font-size:14px;color:#666;">3200314</div>
<div class="t" style="left:337px;top:795px;font-size:14px;color:#666;">LZZ_</div>
<div class="t" style="left:504px;top:795px;font-size:14px;color:#666;">个体用户</div>
<div class="t" style="left:671px;top:795px;font-size:14px;color:#666;">男</div>
<div style="position:absolute;left:1005px;top:794px;width:62px;height:23px;border-radius:11px;background:#5fb878"></div>
<div class="t" style="left:1015px;top:796px;font-size:12px;color:#fff;font-weight:bold">正常</div>
<div style="position:absolute;left:1045px;top:798px;width:16px;height:16px;border-radius:8px;background:#fff"></div>
<div style="position:absolute;left:1172px;top:794px;width:47px;height:23px;border-radius:12px;border:1px solid #e2e2e2;background:#fff;box-sizing:border-box"></div>
<div style="position:absolute;left:1178px;top:798px;width:16px;height:16px;border-radius:8px;background:#d2d2d2"></div>
<div class="t" style="left:1199px;top:796px;font-size:12px;color:#999;">否</div>
<div class="t" style="left:1339px;top:795px;font-size:14px;color:#666;">2021-01-14 15:42</div>
<div class="t" style="left:1506px;top:795px;font-size:14px;color:#666;">2021-01-14 15:42</div>
<div style="position:absolute;left:1673px;top:791px;width:53px;height:30px;background:#009688;border-radius:2px"></div>
<svg style="position:absolute;left:1681px;top:797px" width="9" height="14" viewBox="0 0 9 14" fill="#fff"><rect x="3" y="0.5" width="4" height="3"/><path d="M0.5 4.5 H6.5 V10.5 H8 V13 H0.5 V10.5 H2.5 V7 H0.5 Z"/></svg>
<div class="t" style="left:1691px;top:795px;font-size:12px;color:#fff;font-weight:bold">详情</div>
<div style="position:absolute;left:1673px;top:847px;width:53px;height:3px;background:#009688"></div>
<svg style="position:absolute;left:1790px;top:20px" width="56" height="60" viewBox="0 0 56 60">
<defs><linearGradient id="hg" x1="0" y1="0" x2="1" y2="1"><stop offset="0" stop-color="#3d78ee"/><stop offset="1" stop-color="#5a8ff5"/></linearGradient></defs>
<path d="M28 3 Q29.5 3 31 3.8 L50 14 Q52.5 15.5 52.5 18 L52.5 41 Q52.5 43.5 50 45 L31 55.2 Q28 57 25 55.2 L6 45 Q3.5 43.5 3.5 41 L3.5 18 Q3.5 15.5 6 14 L25 3.8 Q26.5 3 28 3 Z" fill="url(#hg)"/>
<path d="M3.5 18 L28 30 L52.5 18 L50 14 L31 3.8 Q28 2.5 25 3.8 L6 14 Z" fill="#3a72e6" opacity="0.6"/>
<path d="M10 18 L26 22 L44 12.6 L36 28 L48 32.5 L33 37.6 L34.7 48 L18.5 36 L18 26 Z" fill="#eef3ff"/>
</svg>
<div style="position:absolute;left:200px;top:850px;width:1694px;height:34px;background:#eeeeee"></div>
<div class="t" style="left:1005px;top:858px;font-size:14px;color:#666;">2019 © 青缘福田</div>
<div style="position:absolute;left:0;top:865px;width:70px;height:20px;background:#e4e4ec;border-top:1px solid #f4f4f8;box-sizing:border-box"></div>
<div class="t" style="left:3px;top:866px;font-size:12px;color:#333;">javascript:;</div>
</body></html>
